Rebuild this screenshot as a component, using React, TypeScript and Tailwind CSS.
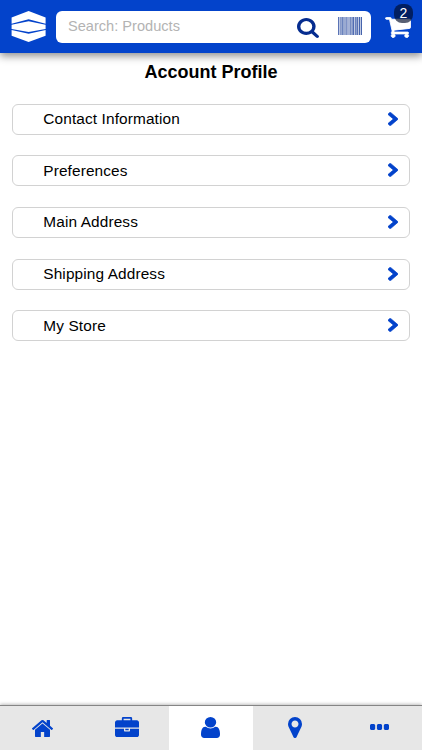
type Glyph = { d: string; box: string };

const icons: Record<string, Glyph> = {
  search: {
    box: "64 128 1664 1664",
    d: "M1216 832q0-185-131.5-316.5t-316.5-131.5-316.5 131.5-131.5 316.5 131.5 316.5 316.5 131.5 316.5-131.5 131.5-316.5zm512 832q0 52-38 90t-90 38q-54 0-90-38l-343-342q-179 124-399 124-143 0-273.5-55.5t-225-150-150-225-55.5-273.5 55.5-273.5 150-225 225-150 273.5-55.5 273.5 55.5 225 150 150 225 55.5 273.5q0 220-124 399l343 343q37 37 37 90z",
  },
  cart: {
    box: "34 226 1724 1468",
    d: "M704 1536q0 52-38 90t-90 38-90-38-38-90 38-90 90-38 90 38 38 90zm896 0q0 52-38 90t-90 38-90-38-38-90 38-90 90-38 90 38 38 90zm128-1088v512q0 24-16.5 42.5t-40.5 21.5l-1044 122q13 60 13 70 0 16-24 64h920q26 0 45 19t19 45-19 45-45 19h-1024q-26 0-45-19t-19-45q0-11 8-31.5t16-36 21.5-40 15.5-29.5l-177-823h-204q-26 0-45-19t-19-45 19-45 45-19h256q16 0 28.5 6.5t19.5 15.5 13 24.5 8 26 5.5 29.5 4.5 26h1201q26 0 45 19t19 45z",
  },
  chevron: {
    box: "346 58 1036 1612",
    d: "M1363 909l-742 710q-19 19-45 19t-45-19l-166-166q-19-19-19-45t19-45l531-499-531-499q-19-19-19-45t19-45l166-166q19-19 45-19t45 19l742 710q19 19 19 45t-19 45z",
  },
  home: {
    box: "90 253 1612 1283",
    d: "M1472 992v480q0 26-19 45t-45 19h-384v-384h-256v384h-384q-26 0-45-19t-19-45v-480q0-1 .5-3t.5-3l575-474 575 474q1 2 1 6zm223-69l-62 74q-8 9-21 11h-3q-13 0-21-7l-692-577-692 577q-12 8-24 7-13-2-21-11l-62-74q-8-10-7-23.5t11-21.5l719-599q32-26 76-26t76 26l244 204v-195q0-14 9-23t23-9h192q14 0 23 9t9 23v408l219 182q10 8 11 21.5t-7 23.5z",
  },
  briefcase: {
    box: "0 0 1792 1536",
    d: "M640 256h512v-128h-512v128zm1152 640v480q0 66-47 113t-113 47h-1472q-66 0-113-47t-47-113v-480h672v160q0 26 19 45t45 19h320q26 0 45-19t19-45v-160h672zm-768 0v128h-256v-128h256zm768-480v384h-1792v-384q0-66 47-113t113-47h352v-160q0-40 28-68t68-28h576q40 0 68 28t28 68v160h352q66 0 113 47t47 113z",
  },
  user: {
    box: "256 128 1280 1536",
    d: "M1536 1399q0 109-62.5 187t-150.5 78h-854q-88 0-150.5-78t-62.5-187q0-85 8.5-160.5t31.5-152 58.5-131 94-89 134.5-34.5q131 128 313 128t313-128q76 0 134.5 34.5t94 89 58.5 131 31.5 152 8.5 160.5zm-256-887q0 159-112.5 271.5t-271.5 112.5-271.5-112.5-112.5-271.5 112.5-271.5 271.5-112.5 271.5 112.5 112.5 271.5z",
  },
  marker: {
    box: "384 128 1024 1536",
    d: "M1152 640q0-106-75-181t-181-75-181 75-75 181 75 181 181 75 181-75 75-181zm256 0q0 109-33 179l-364 774q-16 33-47.5 52t-67.5 19-67.5-19-46.5-52l-365-774q-33-70-33-179 0-212 150-362t362-150 362 150 150 362z",
  },
  more: {
    box: "192 640 1408 384",
    d: "M576 736v192q0 40-28 68t-68 28h-192q-40 0-68-28t-28-68v-192q0-40 28-68t68-28h192q40 0 68 28t28 68zm512 0v192q0 40-28 68t-68 28h-192q-40 0-68-28t-28-68v-192q0-40 28-68t68-28h192q40 0 68 28t28 68zm512 0v192q0 40-28 68t-68 28h-192q-40 0-68-28t-28-68v-192q0-40 28-68t68-28h192q40 0 68 28t28 68z",
  },
};

function Icon({ name, className }: { name: string; className: string }) {
  const { box, d } = icons[name];
  return (
    <svg viewBox={box} preserveAspectRatio="none" fill="currentColor" className={className}>
      <path d={d} />
    </svg>
  );
}

function Logo() {
  return (
    <svg viewBox="-0.6 0 34 31" className="w-[34px] h-[31px] shrink-0 overflow-visible" fill="white">
      <path d="M0 6.6 17 0l17 6.6v6.1L17 8.3 0 12.7z" />
      <path d="M0 13.8 17 10.2l17 3.6v4.3L17 21 0 18.1z" />
      <path d="M0 19.1 17 22.7l17-3.6v5.7L17 31 0 24.8z" />
    </svg>
  );
}

// [x, width, opacity]
const bars = [
  [0, 1, 0.55], [2, 1, 0.3], [3.5, 2, 0.45], [6.5, 1, 0.4], [8, 1.5, 0.35],
  [10.5, 1, 0.3], [12, 1.5, 0.4], [14.5, 1.5, 0.6], [17, 1, 0.45],
  [18.5, 1.5, 0.55], [21, 1, 0.65], [23, 1, 0.65],
];

function Barcode() {
  return (
    <svg viewBox="0 0 24 18" className="w-6 h-[18px] -mt-px">
      <rect width="24" height="18" fill="#052c8f" opacity="0.25" />
      {bars.map(([x, w, o]) => (
        <rect key={x} x={x} width={w} height="18" fill="#052c8f" opacity={o} />
      ))}
    </svg>
  );
}

const rows = ["Contact Information", "Preferences", "Main Address", "Shipping Address", "My Store"];

const tabs = [
  { icon: "home", size: "w-[21px] h-[17px]" },
  { icon: "briefcase", size: "w-6 h-5 mb-[3px]" },
  { icon: "user", size: "w-[19px] h-[21px] mb-[1px]" },
  { icon: "marker", size: "w-[14px] h-[21px] mb-[1px]" },
  { icon: "more", size: "w-[19px] h-[6px] mb-[2px]" },
];

export default function App() {
  return (
    <div className="h-[750px] flex flex-col bg-white overflow-hidden font-['Liberation_Sans',Arial,sans-serif]">
      <header className="h-[53px] shrink-0 flex items-center bg-[#0343cb] px-[11px] shadow-[0_3px_8px_rgba(0,0,0,0.45)]">
        <Logo />
        <div className="ml-[11px] w-[315px] h-8 rounded-[6px] bg-white flex items-center pl-3 pr-[9px]">
          <span className="flex-1 text-[14.6px] text-[#b3b3b3]">Search: Products</span>
          <Icon name="search" className="w-[22px] h-5 text-[#052c8f] mr-[19px] mt-[2px]" />
          <Barcode />
        </div>
        <div className="relative ml-[14px]">
          <Icon name="cart" className="w-[26px] h-[21px] text-white stroke-white [stroke-width:60] mt-[2px]" />
          <span className="absolute left-[9px] -top-[11px] w-[19px] h-[19px] rounded-[8px] bg-[#000a28]/65 text-white text-[14px] leading-[19px] text-center">
            2
          </span>
        </div>
      </header>

      <main className="flex-1 pl-[12px] pr-[12px]">
        <h1 className="mt-[9px] mb-[20.5px] text-center text-[18px] leading-[21px] font-bold text-black">
          Account Profile
        </h1>
        <div className="flex flex-col gap-[20.7px]">
          {rows.map((label) => (
            <button
              key={label}
              className="h-[31px] w-full flex items-center justify-between rounded-[6px] border border-[#d2d2d2] pl-[30.3px] pr-[11px] pb-px text-[15.4px] tracking-[0.12px] text-black"
            >
              {label}
              <Icon name="chevron" className="w-[10px] h-[14px] text-[#0343cb] stroke-[#0343cb] [stroke-width:70]" />
            </button>
          ))}
        </div>
      </main>

      <nav className="h-[45px] shrink-0 grid grid-cols-5 border-t border-[#858585] bg-[#e7e7e7] shadow-[0_-1px_3px_rgba(0,0,0,0.25)]">
        {tabs.map(({ icon, size }) => (
          <button
            key={icon}
            className={icon === "user" ? "flex justify-center items-center bg-white" : "flex justify-center items-center"}
          >
            <Icon name={icon} className={`${size} text-[#0343cb]`} />
          </button>
        ))}
      </nav>
    </div>
  );
}
